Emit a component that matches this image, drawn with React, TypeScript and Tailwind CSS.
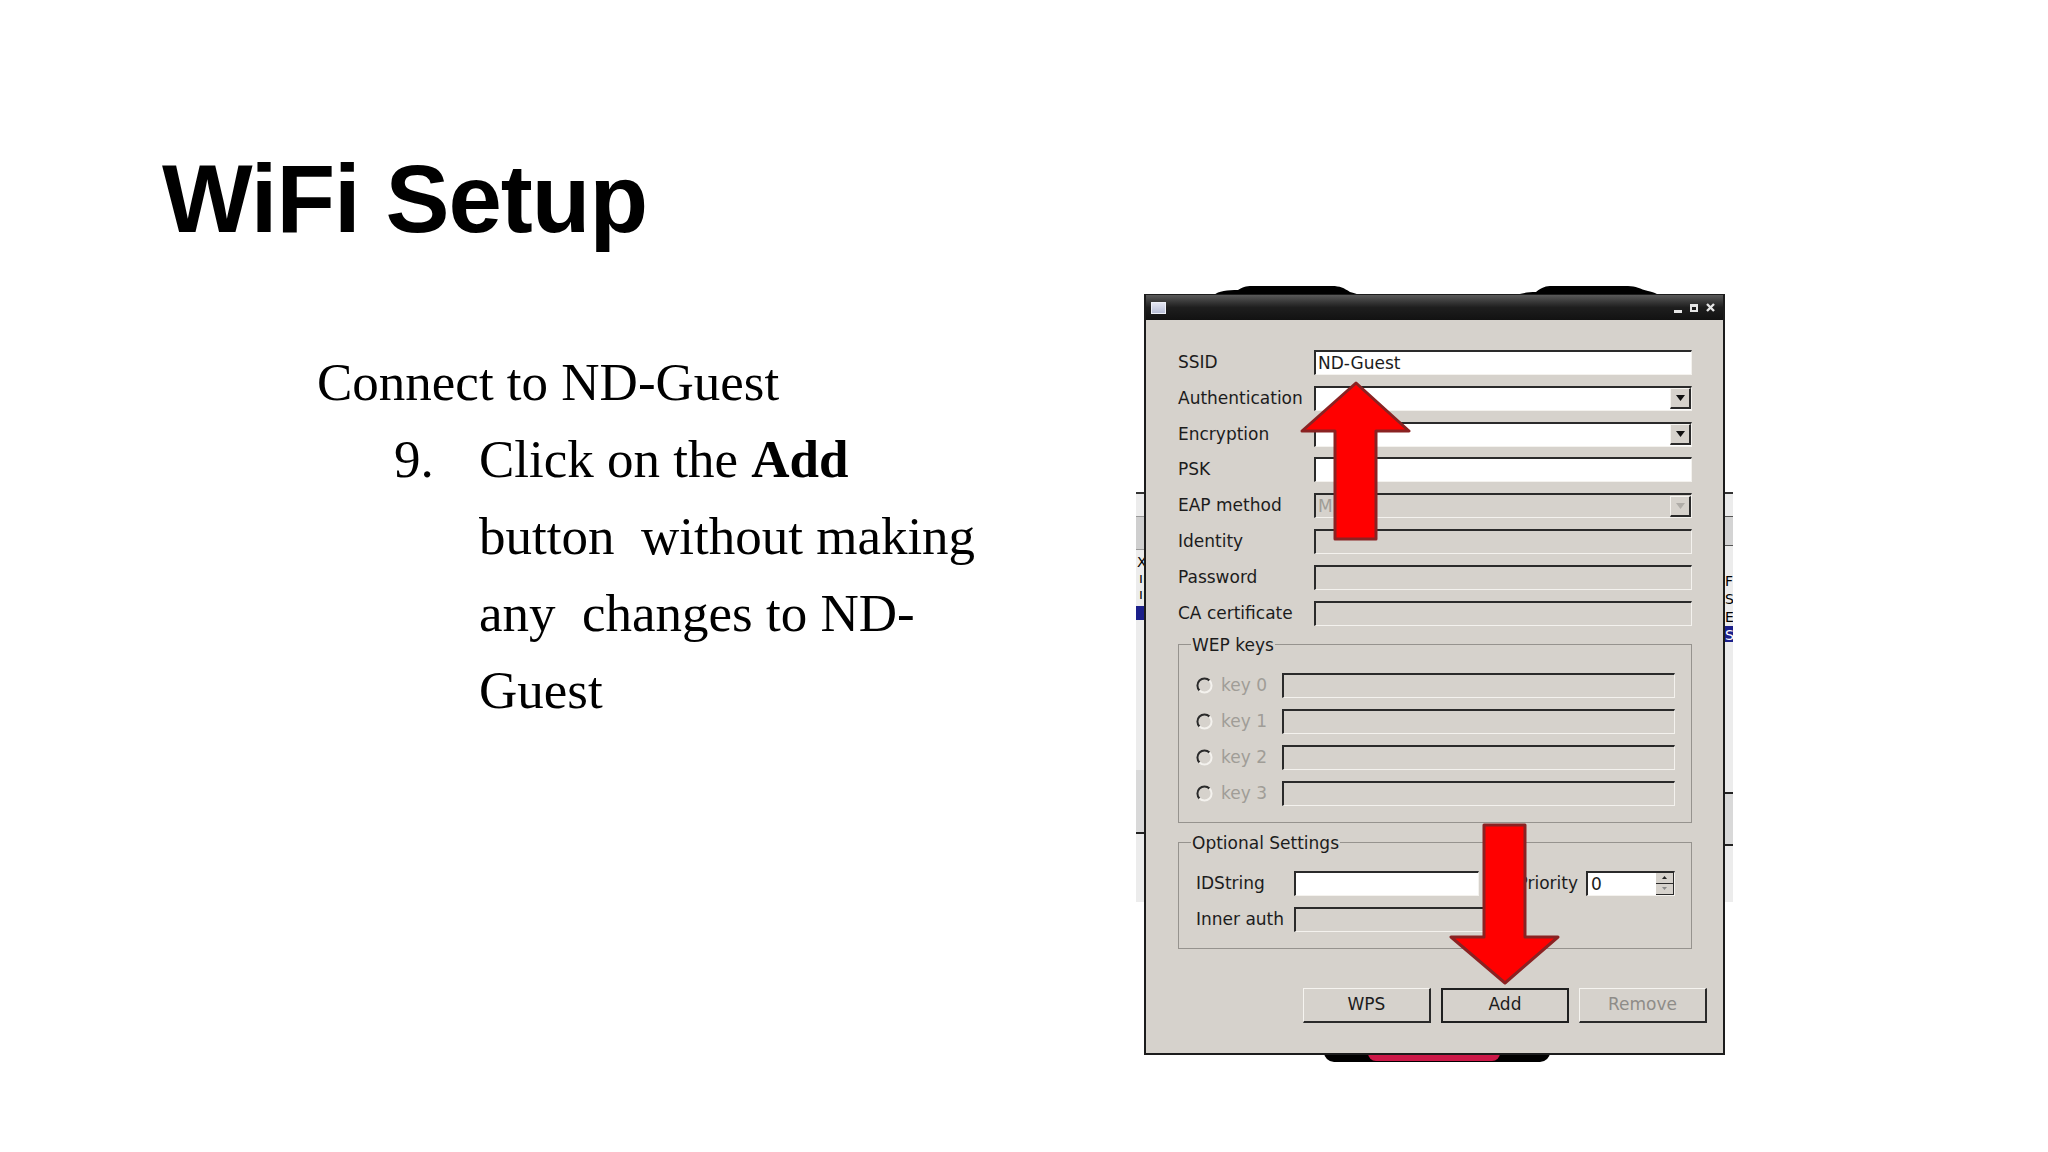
import clsx from 'clsx';

const ui = "font-['DejaVu_Sans',sans-serif]";

// sunken text box of the old GTK dialog
const Field = ({
    white = false,
    drop = false,
    text,
    dim = false,
    className = '',
}: {
    white?: boolean;
    drop?: boolean;
    text?: string;
    dim?: boolean;
    className?: string;
}) => (
    <div
        className={clsx(
            'flex h-[25px] items-center border-t-2 border-l-2 border-b border-r border-t-[#2a2a2a] border-l-[#2a2a2a] border-b-[#f4f2ee] border-r-[#f4f2ee]',
            white ? 'bg-white' : 'bg-[#d6d2cc]',
            className
        )}
    >
        {text && (
            <span className={clsx('pl-[2px] text-[17px] leading-none', dim ? 'text-[#a09d97]' : 'text-[#1c1c1c]')}>
                {text}
            </span>
        )}
        {drop && (
            <div className="ml-auto flex h-[21px] w-[21px] items-center justify-center border-t border-l border-t-[#f6f4f0] border-l-[#f6f4f0] border-b-2 border-r-2 border-b-[#2a2a2a] border-r-[#2a2a2a] bg-[#d6d2cc]">
                <svg width="9" height="6" viewBox="0 0 9 6">
                    <path d="M0 0 H9 L4.5 6 Z" fill={dim ? '#b0ada8' : '#111'} />
                </svg>
            </div>
        )}
    </div>
);

const Radio = () => (
    <svg width="17" height="17" viewBox="0 0 17 17" className="shrink-0">
        <path d="M13.5 3.5 A7 7 0 0 0 3.5 13.5" fill="none" stroke="#2a2a2a" strokeWidth="2" />
        <path d="M3.5 13.5 A7 7 0 0 0 13.5 3.5" fill="none" stroke="#f4f2ee" strokeWidth="2" />
    </svg>
);

const Btn = ({ label, dim = false, def = false }: { label: string; dim?: boolean; def?: boolean }) => (
    <div
        className={clsx(
            'flex h-[35px] w-[128px] items-center justify-center bg-[#d6d2cc] text-[17px]',
            def
                ? 'border-2 border-[#202020]'
                : 'border-t border-l border-t-[#f6f4f0] border-l-[#f6f4f0] border-b-2 border-r-2 border-b-[#2a2a2a] border-r-[#2a2a2a]',
            dim ? 'text-[#8e8c88]' : 'text-[#1c1c1c]'
        )}
    >
        {label}
    </div>
);

const rows: { label: string; white?: boolean; drop?: boolean; text?: string; dim?: boolean }[] = [
    { label: 'SSID', white: true, text: 'ND-Guest' },
    { label: 'Authentication', white: true, drop: true },
    { label: 'Encryption', white: true, drop: true },
    { label: 'PSK', white: true },
    { label: 'EAP method', drop: true, text: 'MD5', dim: true },
    { label: 'Identity' },
    { label: 'Password' },
    { label: 'CA certificate' },
];

const Dialog = () => (
    <div className="relative">
        {/* bits of the desktop that peek out from under the dialog */}
        <svg className="absolute left-[70px] top-[-9px]" width="145" height="10" viewBox="0 0 145 10">
            <path d="M0 10 C4 6 14 5 24 5 C30 1 34 1 40 1 H118 C126 1 130 3 136 7 C140 8 143 9 145 10 Z" fill="#000" />
        </svg>
        <svg className="absolute left-[372px] top-[-9px]" width="142" height="10" viewBox="0 0 142 10">
            <path d="M0 10 C6 8 12 7 20 7 C26 2 30 1 36 1 H112 C120 1 124 4 132 6 C138 7 141 9 142 10 Z" fill="#000" />
        </svg>
        <div className="absolute left-[180px] top-[758px] h-[10px] w-[226px] rounded-b-[10px] bg-black" />
        <div className="absolute left-[224px] top-[758px] h-[9px] w-[132px] rounded-b-[8px] bg-[#cc1848]" />

        <div className={clsx('absolute left-[-8px] top-[198px] flex h-[410px] w-[10px] flex-col overflow-hidden border-t-2 border-[#333] bg-[#ececec] text-[14px] leading-[16px] text-black', ui)}>
            <div className="mt-[22px] h-[34px] border-y border-[#999] bg-[#cfcfcf]" />
            <div className="mt-[4px] pl-[1px]">X</div>
            <div className="pl-[3px]">ıı</div>
            <div className="pl-[3px]">ıı</div>
            <div className="mt-[4px] h-[14px] bg-[#1b1f8a]" />
            <div className="mt-[150px] h-[64px] border-b-2 border-[#222] bg-[#d9d9d9]" />
        </div>
        <div className={clsx('absolute left-[579px] top-[198px] flex h-[410px] w-[10px] flex-col overflow-hidden border-t-2 border-[#333] bg-[#ececec] text-[14px] leading-[18px] text-black', ui)}>
            <div className="mt-[22px] h-[30px] border-y border-[#555] bg-[#d4d4d4]" />
            <div className="mt-[26px] pl-[2px]">F</div>
            <div className="pl-[2px]">S</div>
            <div className="pl-[2px]">E</div>
            <div className="h-[16px] bg-[#1b1f8a] pl-[2px] text-white">S</div>
            <div className="mt-[150px] h-[54px] border-y-2 border-[#222] bg-[#d9d9d9]" />
        </div>

        <div className={clsx('relative flex h-[761px] w-[581px] flex-col border-2 border-t border-[#1c1c1c] bg-[#d6d2cc] text-[#1c1c1c]', ui)}>
            {/* title bar */}
            <div className="flex h-[25px] items-center bg-gradient-to-b from-[#5a5a5a] via-[#1e1e1e] to-[#121212] px-[5px]">
                <div className="h-[12px] w-[15px] border border-[#eef0f8] bg-gradient-to-b from-[#e4e6f2] to-[#b8bed6]" />
                <div className="ml-auto flex items-center gap-[8px] pr-[3px]">
                    <div className="mt-[7px] h-[3px] w-[8px] bg-[#e6e6e6]" />
                    <div className="h-[8px] w-[8px] border-2 border-t-[3px] border-[#e6e6e6]" />
                    <svg width="9" height="9" viewBox="0 0 9 9">
                        <path d="M1 1 L8 8 M8 1 L1 8" stroke="#e6e6e6" strokeWidth="2.4" />
                    </svg>
                </div>
            </div>

            {/* form */}
            <div className="flex flex-1 flex-col pl-[32px] pr-[27px] pt-[30px]">
                <div className="flex flex-col gap-[10.8px]">
                    {rows.map((r) => (
                        <div key={r.label} className="flex items-center">
                            <span className="w-[136px] text-[17px] leading-none">{r.label}</span>
                            <Field white={r.white} drop={r.drop} text={r.text} dim={r.dim} className="w-[378px]" />
                        </div>
                    ))}
                </div>

                <fieldset className="mt-[9px] w-[514px] border border-[#96938e] pb-[16px] pl-[17px] pt-[18px]">
                    <legend className="ml-[-5px] px-[1px] text-[17px] leading-[20px]">WEP keys</legend>
                    <div className="flex flex-col gap-[11px]">
                        {[0, 1, 2, 3].map((k) => (
                            <div key={k} className="flex items-center">
                                <div className="flex w-[86px] items-center gap-[8px]">
                                    <Radio />
                                    <span className="text-[17px] leading-none text-[#a09d97]">key {k}</span>
                                </div>
                                <Field className="w-[393px]" />
                            </div>
                        ))}
                    </div>
                </fieldset>

                <fieldset className="mt-[10px] w-[514px] border border-[#96938e] pb-[16px] pl-[17px] pr-[16px] pt-[18px]">
                    <legend className="ml-[-5px] px-[1px] text-[17px] leading-[20px]">Optional Settings</legend>
                    <div className="flex flex-col gap-[11px]">
                        <div className="flex items-center">
                            <span className="w-[98px] text-[17px] leading-none">IDString</span>
                            <Field white className="w-[185px]" />
                            <span className="flex-1 pr-[8px] text-right text-[17px] leading-none">Priority</span>
                            <div className="flex h-[25px] w-[89px] border-t-2 border-l-2 border-b border-r border-t-[#2a2a2a] border-l-[#2a2a2a] border-b-[#f4f2ee] border-r-[#f4f2ee] bg-white">
                                <span className="pl-[3px] text-[17px] leading-[22px]">0</span>
                                <div className="ml-auto flex w-[18px] flex-col">
                                    <div className="flex flex-1 items-center justify-center border-b border-r border-[#2a2a2a] bg-[#d6d2cc]">
                                        <svg width="5" height="3" viewBox="0 0 5 3"><path d="M0 3 H5 L2.5 0 Z" fill="#222" /></svg>
                                    </div>
                                    <div className="flex flex-1 items-center justify-center border-b border-r border-[#2a2a2a] bg-[#d6d2cc]">
                                        <svg width="5" height="3" viewBox="0 0 5 3"><path d="M0 0 H5 L2.5 3 Z" fill="#8a8a8a" /></svg>
                                    </div>
                                </div>
                            </div>
                        </div>
                        <div className="flex items-center">
                            <span className="w-[98px] text-[17px] leading-none">Inner auth</span>
                            <Field className="w-[196px]" />
                        </div>
                    </div>
                </fieldset>

                <div className="mr-[-11px] mt-[39px] flex justify-end gap-[10px]">
                    <Btn label="WPS" />
                    <Btn label="Add" def />
                    <Btn label="Remove" dim />
                </div>
            </div>

            {/* red arrows drawn on the screenshot */}
            <svg className="pointer-events-none absolute left-[-2px] top-[-1px]" width="581" height="761" viewBox="0 0 581 761">
                <path
                    d="M212 89 L265 137 L232 137 L232 245 L191 245 L191 137 L158 137 Z"
                    fill="#ff0000"
                    stroke="#8a2222"
                    strokeWidth="3"
                    strokeLinejoin="round"
                />
                <path
                    d="M340 531 L381 531 L381 643 L414 643 L361 689 L307 643 L340 643 Z"
                    fill="#ff0000"
                    stroke="#8a2222"
                    strokeWidth="3"
                    strokeLinejoin="round"
                />
            </svg>
        </div>
    </div>
);

export default function App() {
    return (
        <div className="flex h-[1152px] w-[2048px] overflow-hidden bg-white text-black">
            <div className="w-[1144px] shrink-0">
                <h1 className="ml-[162px] mt-[151px] font-['Liberation_Sans',Arial,sans-serif] text-[96px] font-bold leading-none tracking-[-1px]">
                    WiFi Setup
                </h1>
                <div className="ml-[317px] mt-[97px] font-['Liberation_Serif','Times_New_Roman',serif] text-[53px] leading-[77px]">
                    <div>Connect to ND-Guest</div>
                    <div className="ml-[77px] flex">
                        <span className="w-[85px] shrink-0">9.</span>
                        <div className="whitespace-pre">
                            <div>
                                Click on the <b>Add</b>
                            </div>
                            <div>button  without making</div>
                            <div>any  changes to ND-</div>
                            <div>Guest</div>
                        </div>
                    </div>
                </div>
            </div>
            <div className="pt-[294px]">
                <Dialog />
            </div>
        </div>
    );
}
